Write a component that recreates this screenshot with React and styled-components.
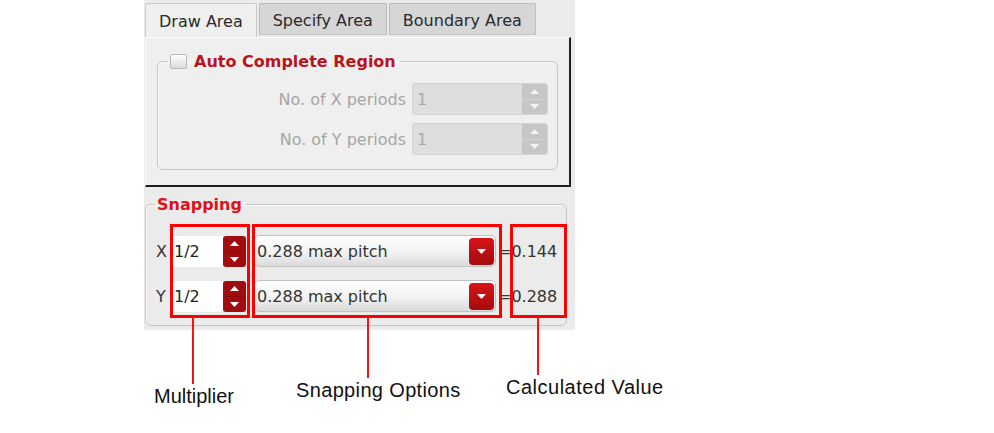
import React from 'react';
import styled, { createGlobalStyle } from 'styled-components';

const GlobalStyle = createGlobalStyle`
  html, body { margin: 0; padding: 0; background: #fff; }
  body { font-family: 'DejaVu Sans', 'Noto Sans', sans-serif; }
`;

const Canvas = styled.div`
  position: relative;
  width: 994px;
  height: 433px;
  background: #fff;
  overflow: hidden;
`;

const Dialog = styled.div`
  margin-left: 144px;
  width: 431px;
  height: 330px;
  box-sizing: border-box;
  padding: 3px 4px 0 1px;
  background: #ebebeb;
  color: #333;
`;

const TabBar = styled.div`
  display: flex;
  gap: 2px;
  height: 34px;
  align-items: stretch;
`;

const Tab = styled.div`
  display: flex;
  align-items: center;
  padding: 2px 13px 0;
  box-sizing: border-box;
  font-size: 16px;
  color: #2a2a2a;
  background: ${p => (p.active ? '#efefef' : '#d6d6d6')};
  border: 1px solid ${p => (p.active ? '#c9c9c9' : '#bdbdbd')};
  border-bottom: ${p => (p.active ? 'none' : '1px solid #c4c4c4')};
  height: ${p => (p.active ? '34px' : '32px')};
  border-radius: 2px 2px 0 0;
`;

const Panel = styled.div`
  box-sizing: border-box;
  height: 150px;
  width: 426px;
  background: #efefef;
  border-top: 1px solid #fafafa;
  border-left: 1px solid #fafafa;
  border-right: 2px solid #1e1e1e;
  border-bottom: 2px solid #1e1e1e;
  padding: 14px 11px 0;
`;

const Group = styled.fieldset`
  margin: 0;
  padding: ${p => p.pad};
  border: 1px solid #c6c6c6;
  border-radius: 6px;
  box-shadow: inset 1px 1px 0 #fbfbfb;
  min-inline-size: 0;
`;

const SnapGroup = styled(Group)`
  margin-top: 8px;
  width: 422px;
  box-sizing: border-box;
`;

const Legend = styled.legend`
  display: flex;
  align-items: center;
  gap: 7px;
  margin-left: ${p => p.indent}px;
  padding: 0 4px 0 2px;
  font-size: 16px;
  line-height: 19px;
  font-weight: bold;
  color: ${p => p.color};
`;

const CheckBox = styled.span`
  display: inline-block;
  width: 15px;
  height: 13px;
  border: 1px solid #b9b9b9;
  border-radius: 2px;
  background: linear-gradient(#fdfdfd, #dcdcdc);
`;

const PeriodRows = styled.div`
  display: flex;
  flex-direction: column;
  align-items: flex-end;
  gap: 8px;
`;

const PeriodRow = styled.div`
  display: flex;
  align-items: center;
  gap: 6px;
`;

const DimLabel = styled.span`
  font-size: 16px;
  color: #a6a6a6;
`;

const DisabledSpin = styled.div`
  display: flex;
  width: 136px;
  height: 32px;
  box-sizing: border-box;
  border: 1px solid #d4d4d4;
  border-radius: 3px;
  background: #dedede;
`;

const SpinText = styled.span`
  flex: 1;
  display: flex;
  align-items: center;
  padding-left: ${p => p.pad || 4}px;
  font-size: 16px;
  color: ${p => p.color};
  background: ${p => p.bg};
`;

const SpinButtons = styled.div`
  display: flex;
  flex-direction: column;
  width: ${p => p.w}px;
  background: ${p => p.bg};
  border-radius: ${p => p.radius};
`;

const SpinHalf = styled.div`
  flex: 1;
  display: flex;
  align-items: center;
  justify-content: center;
  border-bottom: ${p => (p.split ? `1px solid ${p.split}` : 'none')};
`;

const SnapRows = styled.div`
  display: flex;
  flex-direction: column;
  gap: 13px;
`;

const SnapRow = styled.div`
  display: flex;
  align-items: center;
  height: 32px;
  font-size: 16px;
  color: #333;

  & > * { flex-shrink: 0; }
`;

const Axis = styled.span`
  width: 11px;
  margin-right: 4px;
`;

const Multiplier = styled.div`
  display: flex;
  height: 31px;
  width: 75px;
  margin-right: 8px;
`;

const Combo = styled.div`
  display: flex;
  align-items: center;
  width: 242px;
  height: 32px;
  box-sizing: border-box;
  border: 1px solid #c2c2c2;
  border-radius: 5px;
  background: linear-gradient(#ffffff, #f2f2f2 55%, #dadada);
  padding: 0 1px 0 2px;
`;

const ComboText = styled.span`
  flex: 1;
`;

const ComboButton = styled.div`
  width: 25px;
  height: 27px;
  display: flex;
  align-items: center;
  justify-content: center;
  border-radius: 4px;
  background: linear-gradient(#d81418, #a50b0d);
`;

const Result = styled.span`
  margin-left: 2px;
  white-space: nowrap;
`;

const HighlightBox = styled.div`
  position: absolute;
  box-sizing: border-box;
  border: 3px solid #ff0000;
`;

const Leader = styled.div`
  position: absolute;
  width: 2px;
  background: #ff1010;
`;

const Caption = styled.div`
  position: absolute;
  font-family: 'Liberation Sans', Arial, sans-serif;
  font-size: 20px;
  letter-spacing: ${p => p.spacing || 0}px;
  color: #111;
  white-space: nowrap;
`;

function Arrow({ up, color }) {
  return (
    <svg width="9" height="5" viewBox="0 0 9 5">
      <path d={up ? 'M0 5 L4.5 0 L9 5Z' : 'M0 0 L4.5 5 L9 0Z'} fill={color} />
    </svg>
  );
}

function PeriodSpin({ label }) {
  return (
    <PeriodRow>
      <DimLabel>{label}</DimLabel>
      <DisabledSpin>
        <SpinText color="#a8a8a8">1</SpinText>
        <SpinButtons w={25} bg="#c6c6c6" radius="0 2px 2px 0">
          <SpinHalf split="#d2d2d2"><Arrow up color="#f4f4f4" /></SpinHalf>
          <SpinHalf><Arrow color="#f4f4f4" /></SpinHalf>
        </SpinButtons>
      </DisabledSpin>
    </PeriodRow>
  );
}

function SnapLine({ axis, value }) {
  return (
    <SnapRow>
      <Axis>{axis}</Axis>
      <Multiplier>
        <SpinText bg="#fff" color="#222" pad={3}>1/2</SpinText>
        <SpinButtons w={23} bg="#a10c0f" radius="3px">
          <SpinHalf split="#8a0a0c"><Arrow up color="#fff" /></SpinHalf>
          <SpinHalf><Arrow color="#fff" /></SpinHalf>
        </SpinButtons>
      </Multiplier>
      <Combo>
        <ComboText>0.288 max pitch</ComboText>
        <ComboButton><Arrow color="#fff" /></ComboButton>
      </Combo>
      <Result>={value}</Result>
    </SnapRow>
  );
}

const callouts = [
  { x: 192, end: 384, label: 'Multiplier', lx: 154, ly: 385, spacing: 0 },
  { x: 367, end: 378, label: 'Snapping Options', lx: 296, ly: 379, spacing: 0.35 },
  { x: 537, end: 375, label: 'Calculated Value', lx: 506, ly: 376, spacing: 0.5 },
];

const boxes = [
  { left: 170, width: 80 },
  { left: 252, width: 250 },
  { left: 510, width: 57 },
];

export default function App() {
  return (
    <Canvas>
      <GlobalStyle />
      <Dialog>
        <TabBar>
          <Tab active>Draw Area</Tab>
          <Tab>Specify Area</Tab>
          <Tab>Boundary Area</Tab>
        </TabBar>
        <Panel>
          <Group pad="12px 9px 14px">
            <Legend indent={1} color="#bb1420">
              <CheckBox />
              Auto Complete Region
            </Legend>
            <PeriodRows>
              <PeriodSpin label="No. of X periods" />
              <PeriodSpin label="No. of Y periods" />
            </PeriodRows>
          </Group>
        </Panel>
        <SnapGroup pad="21px 10px 13px">
          <Legend indent={-1} color="#e2101a">Snapping</Legend>
          <SnapRows>
            <SnapLine axis="X" value="0.144" />
            <SnapLine axis="Y" value="0.288" />
          </SnapRows>
        </SnapGroup>
      </Dialog>

      {boxes.map(b => (
        <HighlightBox key={b.left} style={{ left: b.left, top: 224, width: b.width, height: 94 }} />
      ))}
      {callouts.map(c => (
        <React.Fragment key={c.label}>
          <Leader style={{ left: c.x, top: 317, height: c.end - 317 }} />
          <Caption spacing={c.spacing} style={{ left: c.lx, top: c.ly }}>{c.label}</Caption>
        </React.Fragment>
      ))}
    </Canvas>
  );
}
